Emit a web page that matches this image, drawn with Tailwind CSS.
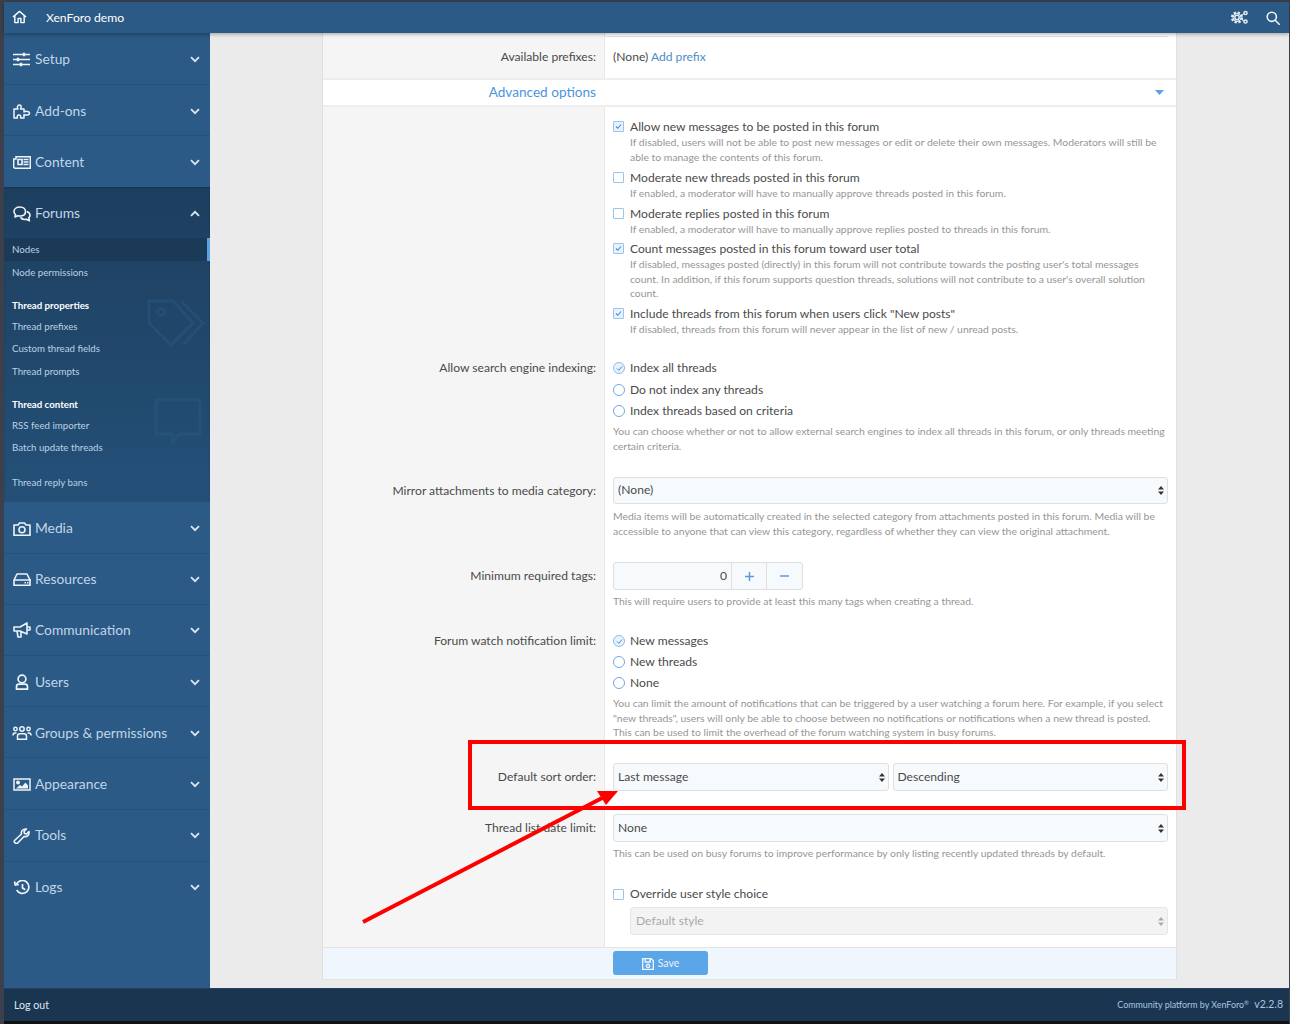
<!DOCTYPE html>
<html lang="en">
<head>
  <meta charset="UTF-8">
  <meta name="viewport" content="width=device-width, initial-scale=1.0">
  <title>XenForo demo - Admin</title>
  <script src="https://cdn.jsdelivr.net/npm/@tailwindcss/browser@4"></script>
</head>
<body class="relative h-[1024px] w-[1290px] overflow-hidden bg-[#3b404c] pt-[2px] pl-[4px] pr-px font-['Lato',sans-serif] text-[12.100px] text-[#4a4a4a]">

  <!-- Top bar -->
  <header class="relative z-10 flex h-[31px] items-center justify-between bg-[#2a5a85] text-white shadow-[0_1px_4px_rgba(0,0,0,0.35)]">
    <div class="flex items-center">
      <svg class="ml-[8px] h-[14px] w-[15px]" viewBox="0 0 16 15" fill="none" stroke="currentColor" stroke-width="1.500" stroke-linejoin="round"><path d="M1 7.500 8 1.500l7 6M3 6v7.500h3.500V9h3v4.500H13V6"/></svg>
      <span class="ml-[19px] pt-[1px] text-[12.200px]">XenForo demo</span>
    </div>
    <div class="flex items-center">
      <svg class="h-[15px] w-[17px]" viewBox="0 0 17 15" fill="none" stroke="#e4edf5" stroke-width="1.500"><circle cx="6" cy="7.500" r="2.200"/><circle cx="6" cy="7.500" r="4" stroke-width="1"/><circle cx="6" cy="7.500" r="4.800" stroke-width="2.600" stroke-dasharray="2.200 1.570"/><circle cx="14.500" cy="3" r="1.600"/><circle cx="14.500" cy="11.500" r="1.600"/><path d="M10.500 5.500 13 3.500M10.500 9.500l2.500 1.500" stroke-width="1"/></svg>
      <svg class="mr-[9px] ml-[18px] h-[14px] w-[14px]" viewBox="0 0 14 14" fill="none" stroke="#eef3f8" stroke-width="1.600"><circle cx="5.800" cy="5.800" r="4.600"/><path d="m9.200 9.200 4 4" stroke-linecap="round"/></svg>
    </div>
  </header>

  <div class="flex h-[955px]">
    <!-- Sidebar -->
    <nav class="w-[206px] shrink-0 bg-[#2a5a85] text-[13.800px] text-[#c2d6e8]">
      <a class="flex h-[52px] items-center border-b border-[#26527a] pt-[2px] pr-[10px] pl-[9px]">
        <svg class="mr-[5px] h-[15px] w-[17px]" viewBox="0 0 17 15" fill="none" stroke="#eef3f8" stroke-width="1.400"><path d="M0 2.500h17M0 7.500h17M0 12.500h17"/><path d="M11 .8v3.400M5 5.800v3.400M8 10.800v3.400" stroke-width="2.400"/></svg>
        <span class="flex-1">Setup</span>
        <svg class="h-[7px] w-[10px]" viewBox="0 0 10 7" fill="none" stroke="#dbe6f0" stroke-width="1.800"><path d="m1 1.200 4 4 4-4"/></svg>
      </a>
      <a class="flex h-[51px] items-center border-b border-[#26527a] pt-[2px] pr-[10px] pl-[9px]">
        <svg class="mr-[4px] h-[17px] w-[18px]" viewBox="0 0 18 17" fill="none" stroke="#eef3f8" stroke-width="1.500" stroke-linejoin="round"><path d="M1 6h4c-1-1.200-1-4 1.500-4S8 4.800 7.500 6H11v3c1-1 5.500-1 5.500 1.200S12 12.400 11 11.500V15H7.500c.8-1.500 0-3-1.500-3s-2.300 1.500-1.500 3H1z"/></svg>
        <span class="flex-1">Add-ons</span>
        <svg class="h-[7px] w-[10px]" viewBox="0 0 10 7" fill="none" stroke="#dbe6f0" stroke-width="1.800"><path d="m1 1.200 4 4 4-4"/></svg>
      </a>
      <a class="flex h-[51px] items-center pt-[2px] pr-[10px] pl-[9px]">
        <svg class="mr-[4px] h-[13px] w-[18px]" viewBox="0 0 18 13" fill="none" stroke="#eef3f8" stroke-width="1.500"><path d="M3 .7h14.300v11.600H2.500C1.300 12.300.7 11.500.7 10.500V3H3z"/><path d="M5 3.500h4v5H5zM10.500 3.500h5M10.500 6h5M10.500 8.500h5" stroke-width="1.600"/></svg>
        <span class="flex-1">Content</span>
        <svg class="h-[7px] w-[10px]" viewBox="0 0 10 7" fill="none" stroke="#dbe6f0" stroke-width="1.800"><path d="m1 1.200 4 4 4-4"/></svg>
      </a>

      <!-- Forums (open) -->
      <div class="relative h-[315px] bg-gradient-to-b from-[#1d3f5f] to-[#245078] shadow-[inset_0_1px_2px_rgba(0,0,0,0.2)]">
        <a class="flex h-[51px] items-center pt-[2px] pr-[10px] pl-[9px]">
          <svg class="mr-[4px] h-[16px] w-[18px]" viewBox="0 0 18 16" fill="none" stroke="#eef3f8" stroke-width="1.600" stroke-linejoin="round"><path d="M7 1C3.500 1 1 3 1 5.500c0 1.200.6 2.200 1.500 3L2 11l2.800-1.300c.7.200 1.400.3 2.200.3 3.500 0 5.500-2 5.500-4.500S10.500 1 7 1z"/><path d="M13.800 5.500C15.800 6.300 17 7.600 17 9.200c0 1-.5 1.900-1.200 2.600l.6 3-3-1.500c-2.600.5-5-.5-6-2"/></svg>
          <span class="flex-1">Forums</span>
          <svg class="h-[7px] w-[10px]" viewBox="0 0 10 7" fill="none" stroke="#dbe6f0" stroke-width="1.800"><path d="m1 5.800 4-4 4 4"/></svg>
        </a>
        <div class="text-[9.700px] text-[#bdd2e4]">
          <a class="flex h-[23px] items-center border-r-[3px] border-[#5ba3e6] bg-[#1b3a58] pl-[8px]">Nodes</a>
          <a class="flex h-[23px] items-center pl-[8px]">Node permissions</a>
          <div class="mt-[10px] flex h-[22px] items-center pl-[8px] font-bold text-white">Thread properties</div>
          <a class="flex h-[21px] items-center pl-[8px]">Thread prefixes</a>
          <a class="flex h-[23px] items-center pl-[8px]">Custom thread fields</a>
          <a class="flex h-[22px] items-center pl-[8px]">Thread prompts</a>
          <div class="mt-[11px] flex h-[22px] items-center pl-[8px] font-bold text-white">Thread content</div>
          <a class="flex h-[21px] items-center pl-[8px]">RSS feed importer</a>
          <a class="flex h-[23px] items-center pl-[8px]">Batch update threads</a>
          <a class="mt-[12px] flex h-[22px] items-center pl-[8px]">Thread reply bans</a>
        </div>
        <!-- faded watermarks -->
        <svg class="absolute top-[112px] left-[143px] h-[50px] w-[58px]" viewBox="0 0 58 50" fill="none" stroke="#2a5a85" stroke-width="3" opacity="0.45"><path d="M2 2h24l20 22-22 22L2 24zM34 2l22 22-20 22"/><circle cx="14" cy="13" r="3.500"/></svg>
        <svg class="absolute top-[211px] left-[150px] h-[48px] w-[48px]" viewBox="0 0 48 48" fill="none" stroke="#2a5a85" stroke-width="3" opacity="0.45" stroke-linejoin="round"><path d="M2 2h44v34H26l-8 9v-9H2z"/></svg>
      </div>

      <a class="flex h-[52px] items-center border-b border-[#26527a] pt-[2px] pr-[10px] pl-[9px]">
        <svg class="mr-[4px] h-[14px] w-[18px]" viewBox="0 0 18 14" fill="none" stroke="#eef3f8" stroke-width="1.600"><path d="M1 3h4l1.500-2h5L13 3h4v10.300H1z" stroke-linejoin="round"/><circle cx="9" cy="7.800" r="3"/></svg>
        <span class="flex-1">Media</span>
        <svg class="h-[7px] w-[10px]" viewBox="0 0 10 7" fill="none" stroke="#dbe6f0" stroke-width="1.800"><path d="m1 1.200 4 4 4-4"/></svg>
      </a>
      <a class="flex h-[51px] items-center border-b border-[#26527a] pr-[10px] pl-[9px]">
        <svg class="mr-[4px] h-[13px] w-[18px]" viewBox="0 0 18 13" fill="none" stroke="#eef3f8" stroke-width="1.600" stroke-linejoin="round"><path d="M1 7 4 1h10l3 6v5.300H1zM1 7h17"/><path d="M11.500 9.700H13M14 9.700h1.500" stroke-width="1.500"/></svg>
        <span class="flex-1">Resources</span>
        <svg class="h-[7px] w-[10px]" viewBox="0 0 10 7" fill="none" stroke="#dbe6f0" stroke-width="1.800"><path d="m1 1.200 4 4 4-4"/></svg>
      </a>
      <a class="flex h-[51px] items-center border-b border-[#26527a] pr-[10px] pl-[9px]">
        <svg class="mr-[4px] h-[16px] w-[18px]" viewBox="0 0 18 16" fill="none" stroke="#eef3f8" stroke-width="1.600" stroke-linejoin="round"><path d="M1 5h6l7-4v11L7 9H1zM4 9l1 6h3V9.500M14 5h3v3h-3"/></svg>
        <span class="flex-1">Communication</span>
        <svg class="h-[7px] w-[10px]" viewBox="0 0 10 7" fill="none" stroke="#dbe6f0" stroke-width="1.800"><path d="m1 1.200 4 4 4-4"/></svg>
      </a>
      <a class="flex h-[51px] items-center border-b border-[#26527a] pt-[2px] pr-[10px] pl-[9px]">
        <svg class="mr-[4px] h-[16px] w-[18px]" viewBox="0 0 18 16" fill="none" stroke="#eef3f8" stroke-width="1.700"><circle cx="9" cy="5" r="3.900"/><path d="M3.500 15.200v-2.500c0-1.500 1-2.500 2.500-2.500h6c1.500 0 2.500 1 2.500 2.500v2.500z" stroke-linejoin="round"/></svg>
        <span class="flex-1">Users</span>
        <svg class="h-[7px] w-[10px]" viewBox="0 0 10 7" fill="none" stroke="#dbe6f0" stroke-width="1.800"><path d="m1 1.200 4 4 4-4"/></svg>
      </a>
      <a class="flex h-[51px] items-center border-b border-[#26527a] pt-[2px] pr-[10px] pl-[8px]">
        <svg class="mr-[3px] h-[14px] w-[20px]" viewBox="0 0 20 14" fill="none" stroke="#eef3f8" stroke-width="1.500"><circle cx="10" cy="3" r="2.200"/><circle cx="3.500" cy="3" r="1.700"/><circle cx="16.500" cy="3" r="1.700"/><path d="M5.500 13.300v-3c0-1.500 1-2.500 2.500-2.500h4c1.500 0 2.500 1 2.500 2.500v3zM1 9.500c0-1.500 1-2.500 2-2.500h1.500M19 9.500c0-1.500-1-2.500-2-2.500h-1.500" stroke-linejoin="round"/></svg>
        <span class="flex-1">Groups &amp; permissions</span>
        <svg class="h-[7px] w-[10px]" viewBox="0 0 10 7" fill="none" stroke="#dbe6f0" stroke-width="1.800"><path d="m1 1.200 4 4 4-4"/></svg>
      </a>
      <a class="flex h-[52px] items-center border-b border-[#26527a] pt-[2px] pr-[10px] pl-[9px]">
        <svg class="mr-[4px] h-[13px] w-[18px]" viewBox="0 0 18 13" fill="none" stroke="#eef3f8" stroke-width="1.500"><path d="M1 1h16v11H1z"/><circle cx="5" cy="4.500" r="1.200" fill="#eef3f8"/><path d="M3 10.500 7 7l2 1.500 3.500-4 2.500 3v3z" fill="#eef3f8" stroke="none"/></svg>
        <span class="flex-1">Appearance</span>
        <svg class="h-[7px] w-[10px]" viewBox="0 0 10 7" fill="none" stroke="#dbe6f0" stroke-width="1.800"><path d="m1 1.200 4 4 4-4"/></svg>
      </a>
      <a class="flex h-[52px] items-center border-b border-[#26527a] pr-[10px] pl-[9px]">
        <svg class="mr-[4px] h-[16px] w-[18px]" viewBox="0 0 18 16" fill="none" stroke="#eef3f8" stroke-width="1.600" stroke-linejoin="round"><path d="M1.500 12.500 8.500 6c-.8-3 1.500-5.500 5-5l-2.500 2.500.5 2 2 .5L16 3.500c.5 3.500-2 5.800-5 5l-6.500 6.700c-1.500 1-4-1-3-2.700z"/></svg>
        <span class="flex-1">Tools</span>
        <svg class="h-[7px] w-[10px]" viewBox="0 0 10 7" fill="none" stroke="#dbe6f0" stroke-width="1.800"><path d="m1 1.200 4 4 4-4"/></svg>
      </a>
      <a class="flex h-[51px] items-center pr-[10px] pl-[9px]">
        <svg class="mr-[4px] h-[15px] w-[18px]" viewBox="0 0 18 15" fill="none" stroke="#eef3f8" stroke-width="1.700"><path d="M3.500 4.200A6.500 6.500 0 1 1 3.700 10M1.500 1.500l.8 3.500 3.500-.5M9.500 4v4l2.800 1.800"/></svg>
        <span class="flex-1">Logs</span>
        <svg class="h-[7px] w-[10px]" viewBox="0 0 10 7" fill="none" stroke="#dbe6f0" stroke-width="1.800"><path d="m1 1.200 4 4 4-4"/></svg>
      </a>
    </nav>

    <!-- Main content -->
    <main class="flex-1 bg-[#ebebeb] pl-[112px]">
      <div class="relative w-[855px] border-x border-[#e0e0e0] bg-white">

        <!-- Available prefixes -->
        <div class="flex h-[45px]">
          <div class="w-[282px] shrink-0 border-r border-[#e8e8e8] bg-[#f5f5f5] pt-[15px] pr-[8px] text-right leading-[18px]">Available prefixes:</div>
          <div class="relative flex-1 pt-[15px] pl-[8px] leading-[18px]">
            <div class="absolute top-[3px] left-0 h-px w-[563px] bg-[#e6e6e6]"></div>
            (None) <a class="text-[#4d8cc8]">Add prefix</a>
          </div>
        </div>

        <!-- Advanced options -->
        <div class="flex h-[29px] items-center border-y-2 border-[#eeeeee] pr-[12px]">
          <div class="w-[273px] text-right text-[13.600px] text-[#4d94dd]">Advanced options</div>
          <div class="flex-1"></div>
          <svg class="h-[5px] w-[9px]" viewBox="0 0 9 5"><path d="M0 0h9L4.500 5z" fill="#5ba3e6"/></svg>
        </div>

        <!-- Forum flags -->
        <div class="flex h-[243px]">
          <div class="w-[282px] shrink-0 border-r border-[#e8e8e8] bg-[#f5f5f5]"></div>
          <div class="flex-1 pt-[12px] pr-[8px] pl-[8px]">
            <div class="flex">
              <span class="mt-[2px] mr-[6px] flex h-[11px] w-[11px] shrink-0 items-center justify-center rounded-[1px] border-[1.500px] border-[#9cc4ee] bg-[#e8f2fc]"><svg class="h-[7px] w-[7px]" viewBox="0 0 7 7" fill="none" stroke="#4d8cc8" stroke-width="1.100"><path d="m1 3.500 1.800 1.800L6 1.500"/></svg></span>
              <div>
                <div class="leading-[16px]">Allow new messages to be posted in this forum</div>
                <p class="text-[10.400px] leading-[14.500px] text-[#969696]">If disabled, users will not be able to post new messages or edit or delete their own messages. Moderators will still be able to manage the contents of this forum.</p>
              </div>
            </div>
            <div class="mt-[6px] flex">
              <span class="mt-[2px] mr-[6px] h-[11px] w-[11px] shrink-0 rounded-[1px] border-[1.500px] border-[#9cc4ee]"></span>
              <div>
                <div class="leading-[16px]">Moderate new threads posted in this forum</div>
                <p class="text-[10.400px] leading-[14.500px] text-[#969696]">If enabled, a moderator will have to manually approve threads posted in this forum.</p>
              </div>
            </div>
            <div class="mt-[5px] flex">
              <span class="mt-[2px] mr-[6px] h-[11px] w-[11px] shrink-0 rounded-[1px] border-[1.500px] border-[#9cc4ee]"></span>
              <div>
                <div class="leading-[16px]">Moderate replies posted in this forum</div>
                <p class="text-[10.400px] leading-[14.500px] text-[#969696]">If enabled, a moderator will have to manually approve replies posted to threads in this forum.</p>
              </div>
            </div>
            <div class="mt-[5px] flex">
              <span class="mt-[2px] mr-[6px] flex h-[11px] w-[11px] shrink-0 items-center justify-center rounded-[1px] border-[1.500px] border-[#9cc4ee] bg-[#e8f2fc]"><svg class="h-[7px] w-[7px]" viewBox="0 0 7 7" fill="none" stroke="#4d8cc8" stroke-width="1.100"><path d="m1 3.500 1.800 1.800L6 1.500"/></svg></span>
              <div>
                <div class="leading-[16px]">Count messages posted in this forum toward user total</div>
                <p class="text-[10.400px] leading-[14.500px] text-[#969696]">If disabled, messages posted (directly) in this forum will not contribute towards the posting user's total messages count. In addition, if this forum supports question threads, solutions will not contribute to a user's overall solution count.</p>
              </div>
            </div>
            <div class="mt-[5px] flex">
              <span class="mt-[2px] mr-[6px] flex h-[11px] w-[11px] shrink-0 items-center justify-center rounded-[1px] border-[1.500px] border-[#9cc4ee] bg-[#e8f2fc]"><svg class="h-[7px] w-[7px]" viewBox="0 0 7 7" fill="none" stroke="#4d8cc8" stroke-width="1.100"><path d="m1 3.500 1.800 1.800L6 1.500"/></svg></span>
              <div>
                <div class="leading-[16px]">Include threads from this forum when users click "New posts"</div>
                <p class="text-[10.400px] leading-[14.500px] text-[#969696]">If disabled, threads from this forum will never appear in the list of new / unread posts.</p>
              </div>
            </div>
          </div>
        </div>

        <!-- Search engine indexing -->
        <div class="flex h-[115px]">
          <div class="w-[282px] shrink-0 border-r border-[#e8e8e8] bg-[#f5f5f5] pt-[10px] pr-[8px] text-right leading-[16px]">Allow search engine indexing:</div>
          <div class="flex-1 pt-[10px] pr-[8px] pl-[8px]">
            <div class="flex h-[16px] items-center"><span class="mr-[5px] flex h-[12px] w-[12px] items-center justify-center rounded-full border-[1.500px] border-[#8fbcec] bg-[#e8f2fc]"><svg class="h-[7px] w-[7px]" viewBox="0 0 7 7" fill="none" stroke="#4d8cc8" stroke-width="1"><path d="m1 3.500 1.800 1.800L6 1.500"/></svg></span>Index all threads</div>
            <div class="mt-[6px] flex h-[16px] items-center"><span class="mr-[5px] h-[12px] w-[12px] rounded-full border-[1.500px] border-[#6fa8e4]"></span>Do not index any threads</div>
            <div class="mt-[5px] flex h-[16px] items-center"><span class="mr-[5px] h-[12px] w-[12px] rounded-full border-[1.500px] border-[#6fa8e4]"></span>Index threads based on criteria</div>
            <p class="mt-[5px] text-[10.400px] leading-[14.500px] text-[#969696]">You can choose whether or not to allow external search engines to index all threads in this forum, or only threads meeting certain criteria.</p>
          </div>
        </div>

        <!-- Mirror attachments -->
        <div class="flex h-[84px]">
          <div class="w-[282px] shrink-0 border-r border-[#e8e8e8] bg-[#f5f5f5] pt-[12px] pr-[8px] text-right leading-[27px]">Mirror attachments to media category:</div>
          <div class="flex-1 pt-[12px] pr-[8px] pl-[8px]">
            <div class="flex h-[27px] items-center justify-between rounded-[3px] border border-[#e0e0e0] bg-[#f7fafd] pr-[3px] pl-[4px]">
              (None)
              <svg class="h-[9px] w-[6px]" viewBox="0 0 6 9" fill="#333"><path d="M3 0 6 3.500H0zM3 9 0 5.500h6z"/></svg>
            </div>
            <p class="mt-[5px] text-[10.400px] leading-[14.500px] text-[#969696]">Media items will be automatically created in the selected category from attachments posted in this forum. Media will be accessible to anyone that can view this category, regardless of whether they can view the original attachment.</p>
          </div>
        </div>

        <!-- Minimum required tags -->
        <div class="flex h-[76px]">
          <div class="w-[282px] shrink-0 border-r border-[#e8e8e8] bg-[#f5f5f5] pt-[13px] pr-[8px] text-right leading-[28px]">Minimum required tags:</div>
          <div class="flex-1 pt-[13px] pr-[8px] pl-[8px]">
            <div class="flex h-[28px] w-[190px] items-stretch rounded-[3px] border border-[#e0e0e0] bg-[#f7fafd]">
              <div class="flex w-[118px] items-center justify-end border-r border-[#e0e0e0] pr-[4px]">0</div>
              <div class="flex w-[35px] items-center justify-center border-r border-[#e0e0e0]"><svg class="h-[9px] w-[9px]" viewBox="0 0 9 9" stroke="#5b9ae0" stroke-width="1.500"><path d="M4.500 0v9M0 4.500h9"/></svg></div>
              <div class="flex flex-1 items-center justify-center"><svg class="h-[2px] w-[9px]" viewBox="0 0 9 2" stroke="#5b9ae0" stroke-width="1.500"><path d="M0 1h9"/></svg></div>
            </div>
            <p class="mt-[4px] text-[10.400px] leading-[14.500px] text-[#969696]">This will require users to provide at least this many tags when creating a thread.</p>
          </div>
        </div>

        <!-- Watch notification limit -->
        <div class="flex h-[125px]">
          <div class="w-[282px] shrink-0 border-r border-[#e8e8e8] bg-[#f5f5f5] pt-[8px] pr-[8px] text-right leading-[16px]">Forum watch notification limit:</div>
          <div class="flex-1 pt-[8px] pr-[8px] pl-[8px]">
            <div class="flex h-[16px] items-center"><span class="mr-[5px] flex h-[12px] w-[12px] items-center justify-center rounded-full border-[1.500px] border-[#8fbcec] bg-[#e8f2fc]"><svg class="h-[7px] w-[7px]" viewBox="0 0 7 7" fill="none" stroke="#4d8cc8" stroke-width="1"><path d="m1 3.500 1.800 1.800L6 1.500"/></svg></span>New messages</div>
            <div class="mt-[5px] flex h-[16px] items-center"><span class="mr-[5px] h-[12px] w-[12px] rounded-full border-[1.500px] border-[#6fa8e4]"></span>New threads</div>
            <div class="mt-[5px] flex h-[16px] items-center"><span class="mr-[5px] h-[12px] w-[12px] rounded-full border-[1.500px] border-[#6fa8e4]"></span>None</div>
            <p class="mt-[5px] text-[10.400px] leading-[14.500px] text-[#969696]">You can limit the amount of notifications that can be triggered by a user watching a forum here. For example, if you select "new threads", users will only be able to choose between no notifications or notifications when a new thread is posted. This can be used to limit the overhead of the forum watching system in busy forums.</p>
          </div>
        </div>

        <!-- Default sort order -->
        <div class="flex h-[52px]">
          <div class="w-[282px] shrink-0 border-r border-[#e8e8e8] bg-[#f5f5f5] pt-[13px] pr-[8px] text-right leading-[28px]">Default sort order:</div>
          <div class="flex flex-1 gap-[4px] pt-[13px] pr-[8px] pl-[8px]">
            <div class="flex h-[28px] flex-1 items-center justify-between rounded-[3px] border border-[#e0e0e0] bg-[#f7fafd] pr-[3px] pl-[4px]">
              Last message
              <svg class="h-[9px] w-[6px]" viewBox="0 0 6 9" fill="#333"><path d="M3 0 6 3.500H0zM3 9 0 5.500h6z"/></svg>
            </div>
            <div class="flex h-[28px] flex-1 items-center justify-between rounded-[3px] border border-[#e0e0e0] bg-[#f7fafd] pr-[3px] pl-[4px]">
              Descending
              <svg class="h-[9px] w-[6px]" viewBox="0 0 6 9" fill="#333"><path d="M3 0 6 3.500H0zM3 9 0 5.500h6z"/></svg>
            </div>
          </div>
        </div>

        <!-- Thread list date limit -->
        <div class="flex h-[72px]">
          <div class="w-[282px] shrink-0 border-r border-[#e8e8e8] bg-[#f5f5f5] pt-[12px] pr-[8px] text-right leading-[28px]">Thread list date limit:</div>
          <div class="flex-1 pt-[12px] pr-[8px] pl-[8px]">
            <div class="flex h-[28px] items-center justify-between rounded-[3px] border border-[#e0e0e0] bg-[#f7fafd] pr-[3px] pl-[4px]">
              None
              <svg class="h-[9px] w-[6px]" viewBox="0 0 6 9" fill="#333"><path d="M3 0 6 3.500H0zM3 9 0 5.500h6z"/></svg>
            </div>
            <p class="mt-[4px] text-[10.400px] leading-[14.500px] text-[#969696]">This can be used on busy forums to improve performance by only listing recently updated threads by default.</p>
          </div>
        </div>

        <!-- Style override -->
        <div class="flex h-[73px]">
          <div class="w-[282px] shrink-0 border-r border-[#e8e8e8] bg-[#f5f5f5]"></div>
          <div class="flex-1 pt-[12px] pr-[8px] pl-[8px]">
            <div class="flex h-[16px] items-center"><span class="mr-[6px] h-[11px] w-[11px] rounded-[1px] border-[1.500px] border-[#9cc4ee]"></span>Override user style choice</div>
            <div class="mt-[5px] ml-[17px] flex h-[28px] items-center justify-between rounded-[3px] border border-[#e6e6e6] bg-[#f3f3f3] pr-[3px] pl-[5px] text-[#aaa]">
              Default style
              <svg class="h-[9px] w-[6px]" viewBox="0 0 6 9" fill="#aaa"><path d="M3 0 6 3.500H0zM3 9 0 5.500h6z"/></svg>
            </div>
          </div>
        </div>

        <!-- Save bar -->
        <div class="flex h-[33px] border-y border-[#e4e4e4] bg-[#eff6fd] pt-[3px] pl-[290px]">
          <button class="flex h-[24px] w-[95px] items-center justify-center gap-[4px] rounded-[3px] bg-[#5ba6e8] pt-[1px] text-[10.500px] text-[#e8f2fb]">
            <svg class="h-[12px] w-[12px]" viewBox="0 0 11 11" fill="none" stroke="#eef5fc" stroke-width="1.300"><path d="M.6.600h7.800l2 2v7.800H.6z"/><path d="M3 .6v3h4.500v-3"/><circle cx="5.500" cy="7.300" r="1.500"/></svg>
            Save
          </button>
        </div>
      </div>
    </main>
  </div>

  <!-- Footer -->
  <footer class="flex h-[33px] items-center justify-between border-t border-[#24405c] bg-[#193550] pr-[6px] pl-[10px] text-[#dfe8f0]">
    <a class="pt-[2px] text-[10.600px]">Log out</a>
    <span class="text-[8.900px] text-[#a9c6e0]">Community platform by XenForo<sup class="text-[6px]">®</sup> <span class="ml-[3px] text-[10.500px]">v2.2.8</span></span>
  </footer>
  <div class="h-[3px] bg-[#111]"></div>

  <!-- Red annotation drawn over the screenshot -->
  <svg class="absolute top-0 left-0 z-20" width="1290" height="1024" viewBox="0 0 1290 1024" fill="none">
    <rect x="470" y="742" width="714" height="66" stroke="#ff0000" stroke-width="4"/>
    <path d="M363 922 606 796" stroke="#ff0000" stroke-width="4"/>
    <path d="M597 791h21l-12 14z" fill="#ff0000"/>
  </svg>
</body>
</html>
